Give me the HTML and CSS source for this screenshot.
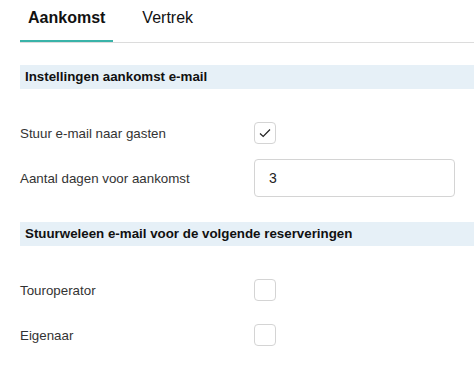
FILE: index.html
```html
<!DOCTYPE html>
<html lang="nl">
<head>
    <meta charset="UTF-8">
    <meta name="viewport" content="width=device-width, initial-scale=1.0">
    <title>Aankomst</title>
    <link rel="stylesheet" href="styles.css">
</head>
<body>
    <div class="page">
        <div class="tabs">
            <div class="tab active">Aankomst</div>
            <div class="tab">Vertrek</div>
        </div>

        <div class="section">
            <div class="section-title">Instellingen aankomst e-mail</div>
            <div class="row">
                <label class="row-label">Stuur e-mail naar gasten</label>
                <span class="check checked">
                    <svg width="12" height="10" viewBox="0 0 12 10">
                        <path d="M1 5.5 L4.2 8.5 L11 1.5" fill="none" stroke="#222" stroke-width="1.2"/>
                    </svg>
                </span>
            </div>
            <div class="row">
                <label class="row-label">Aantal dagen voor aankomst</label>
                <input class="field" type="text" value="3">
            </div>
        </div>

        <div class="section">
            <div class="section-title">Stuurweleen e-mail voor de volgende reserveringen</div>
            <div class="row">
                <label class="row-label">Touroperator</label>
                <span class="check"></span>
            </div>
            <div class="row">
                <label class="row-label">Eigenaar</label>
                <span class="check"></span>
            </div>
        </div>
    </div>
</body>
</html>
```

FILE: styles.css
```css
/* General Styling */
* {
    margin: 0;
    padding: 0;
    box-sizing: border-box;
}

body {
    font-family: "Liberation Sans", Arial, sans-serif;
    background: #fff;
    color: #333;
}

.page {
    padding-left: 20px;
}

/* Tabs */
.tabs {
    display: flex;
    gap: 21px;
    height: 43px;
    border-bottom: 1px solid #dcdcdc;
}

.tab {
    height: 42px;
    padding: 3px 8px 0;
    font-size: 16px;
    line-height: 30px;
    color: #111;
}

.tab.active {
    font-weight: bold;
    border-bottom: 2px solid #3ab3a9;
}

/* Sections */
.section {
    margin-top: 22px;
    display: flex;
    flex-direction: column;
    gap: 7px;
}

.section + .section {
    margin-top: 25px;
}

.section-title {
    height: 24px;
    line-height: 24px;
    padding-left: 5px;
    margin-bottom: 18px;
    background: #e6f0f7;
    font-size: 13.33px;
    font-weight: bold;
    color: #111;
}

.row {
    display: flex;
    align-items: center;
    height: 38px;
}

.row-label {
    width: 234px;
    font-size: 13.33px;
    color: #333;
}

.check {
    width: 22px;
    height: 22px;
    border: 1px solid #d4d4d4;
    border-radius: 4px;
    display: flex;
    align-items: center;
    justify-content: center;
}

.field {
    width: 201px;
    height: 38px;
    border: 1px solid #d4d4d4;
    border-radius: 4px;
    padding: 0 14px;
    font-family: inherit;
    font-size: 14px;
    color: #222;
    outline: none;
}
```
